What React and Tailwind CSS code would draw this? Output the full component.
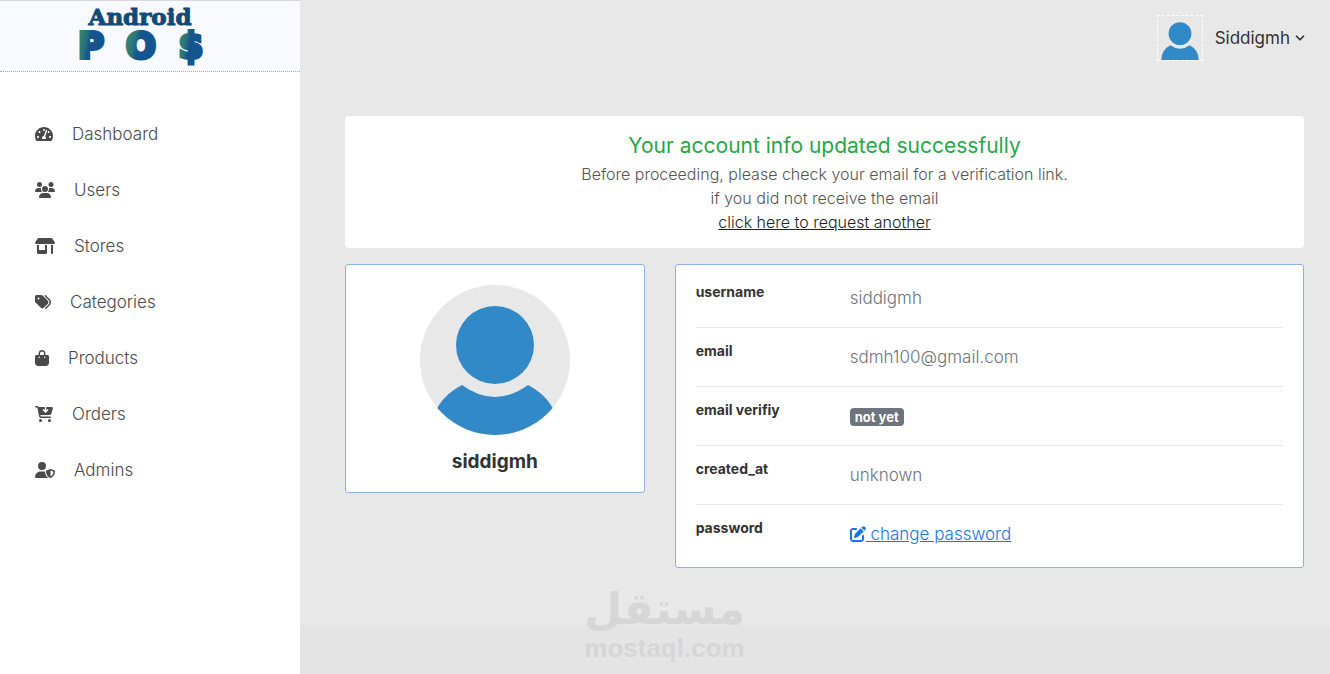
import React from 'react';
import { FaTachometerAlt } from 'react-icons/fa';
import { FaUsers, FaShop, FaTags, FaBagShopping, FaCartArrowDown, FaUserShield, FaPenToSquare } from 'react-icons/fa6';
import { ChevronDown } from 'lucide-react';

const navItems = [
    { label: 'Dashboard', Icon: FaTachometerAlt, size: 'w-[18px]' },
    { label: 'Users', Icon: FaUsers, size: 'w-5' },
    { label: 'Stores', Icon: FaShop, size: 'w-5' },
    { label: 'Categories', Icon: FaTags, size: 'w-4' },
    { label: 'Products', Icon: FaBagShopping, size: 'w-[14px]' },
    { label: 'Orders', Icon: FaCartArrowDown, size: 'w-[18px]' },
    { label: 'Admins', Icon: FaUserShield, size: 'w-5' },
];

function Logo() {
    return (
        <svg width="150" height="70" viewBox="0 0 150 70" className="overflow-visible" role="img" aria-label="Android POS">
            <defs>
                <linearGradient id="posGradient" x1="0" y1="0.4" x2="0.7" y2="0.6">
                    <stop offset="0%" stopColor="#358573" />
                    <stop offset="35%" stopColor="#2a7479" />
                    <stop offset="60%" stopColor="#14548f" />
                </linearGradient>
            </defs>
            <text x="75" y="24" textAnchor="middle" fontFamily="DejaVu Serif" fontWeight="700" fontSize="23" fill="#104a78" stroke="#104a78" strokeWidth="1">Android</text>
            <g fontFamily="DejaVu Sans" fontWeight="700" fontSize="35" textAnchor="middle" fill="url(#posGradient)" stroke="url(#posGradient)" strokeWidth="4">
                <text x="26" y="57">P</text>
                <text x="76" y="57">O</text>
                <text x="126" y="57">$</text>
            </g>
        </svg>
    );
}

function Person({ className }) {
    return (
        <svg viewBox="0 0 150 150" className={className} aria-hidden="true">
            <rect width="150" height="150" fill="#e8e8e8" />
            <circle cx="75" cy="60" r="39" fill="#3289c8" />
            <path d="M42 100 Q75 124 108 100 Q139 116 139 150 H11 Q11 116 42 100 Z" fill="#3289c8" />
        </svg>
    );
}

function Row({ label, children }) {
    return (
        <div className="flex border-b border-black/10 pb-4 mb-4 last:border-b-0 last:mb-0 last:pb-0">
            <dt className="w-[154px] shrink-0 text-sm leading-[14px] font-bold text-[#333]">{label}</dt>
            <dd className="h-[26px] text-[17px] leading-[26px] font-light text-[#6c757d]">{children}</dd>
        </div>
    );
}

export default function App() {
    return (
        <div className="flex min-h-screen bg-[#e8e8e8] font-['Inter',sans-serif] text-[#333]">
            <aside className="w-[300px] shrink-0 bg-white">
                <div className="border-t border-t-[#d9d9dd] bg-[#f8faff]">
                    <div className="h-[71px] border-b border-dotted border-[#aaa] pl-[65px]">
                        <Logo />
                    </div>
                </div>
                <nav className="pt-[34px]">
                    {navItems.map(({ label, Icon, size }) => (
                        <a key={label} href="#" className="flex items-center gap-[19px] h-14 pl-[35px] text-[17px] leading-[26px] font-light text-[#4a4a4a]">
                            <Icon className={`h-4 ${size}`} />
                            {label}
                        </a>
                    ))}
                </nav>
            </aside>

            <main className="relative flex flex-1 flex-col">
                <header className="flex items-start justify-end pr-[23px] pt-[15px] h-[116px]">
                    <button type="button" className="flex items-center text-[17px] leading-[26px]">
                        <Person className="w-[46px] h-[46px] border border-dashed border-white mr-3" />
                        Siddigmh
                        <ChevronDown className="w-[14px] h-[14px] ml-[3px]" strokeWidth={3} />
                    </button>
                </header>

                <div className="flex-1 pl-[45px] pr-[26px]">
                    <section className="rounded bg-white py-[14px] mb-4 text-center text-base leading-6 font-light text-[#555]">
                        <h1 className="text-[21px] leading-8 font-normal text-[#28a745]">Your account info updated successfully</h1>
                        <p>Before proceeding, please check your email for a verification link.</p>
                        <p>if you did not receive the email</p>
                        <a href="#" className="underline text-[#222]">click here to request another</a>
                    </section>

                    <div className="flex items-start -mx-[15px]">
                        <div className="w-1/3 px-[15px]">
                            <section className="flex flex-col items-center rounded-[3px] border border-[#8fb0ea] bg-white p-5">
                                <Person className="w-[150px] h-[150px] rounded-full" />
                                <h2 className="mt-4 text-[19px] leading-[21px] font-bold">siddigmh</h2>
                            </section>
                        </div>
                        <div className="w-2/3 px-[15px]">
                            <dl className="rounded-[3px] border border-[#8fb0ea] bg-white p-5">
                                <Row label="username">siddigmh</Row>
                                <Row label="email">sdmh100@gmail.com</Row>
                                <Row label="email verifiy">
                                    <span className="inline-block rounded bg-[#6c757d] px-[5px] text-[13px] leading-[18px] font-bold text-white">not yet</span>
                                </Row>
                                <Row label="created_at">unknown</Row>
                                <Row label="password">
                                    <a href="#" className="flex items-center text-[#1a75e8] underline">
                                        <FaPenToSquare className="w-4 h-4" />
                                        <span className="whitespace-pre"> change password</span>
                                    </a>
                                </Row>
                            </dl>
                        </div>
                    </div>
                </div>

                <footer className="h-[49px] bg-[#e4e4e4]" />
                <div className="pointer-events-none absolute bottom-3 left-[284px] text-center text-[#d6d6d6] font-bold">
                    <div dir="rtl" className="font-['DejaVu_Sans'] text-[44px] leading-[50px]">مستقل</div>
                    <div className="font-['Liberation_Sans'] text-[26px] leading-7">mostaql.com</div>
                </div>
            </main>
        </div>
    );
}
